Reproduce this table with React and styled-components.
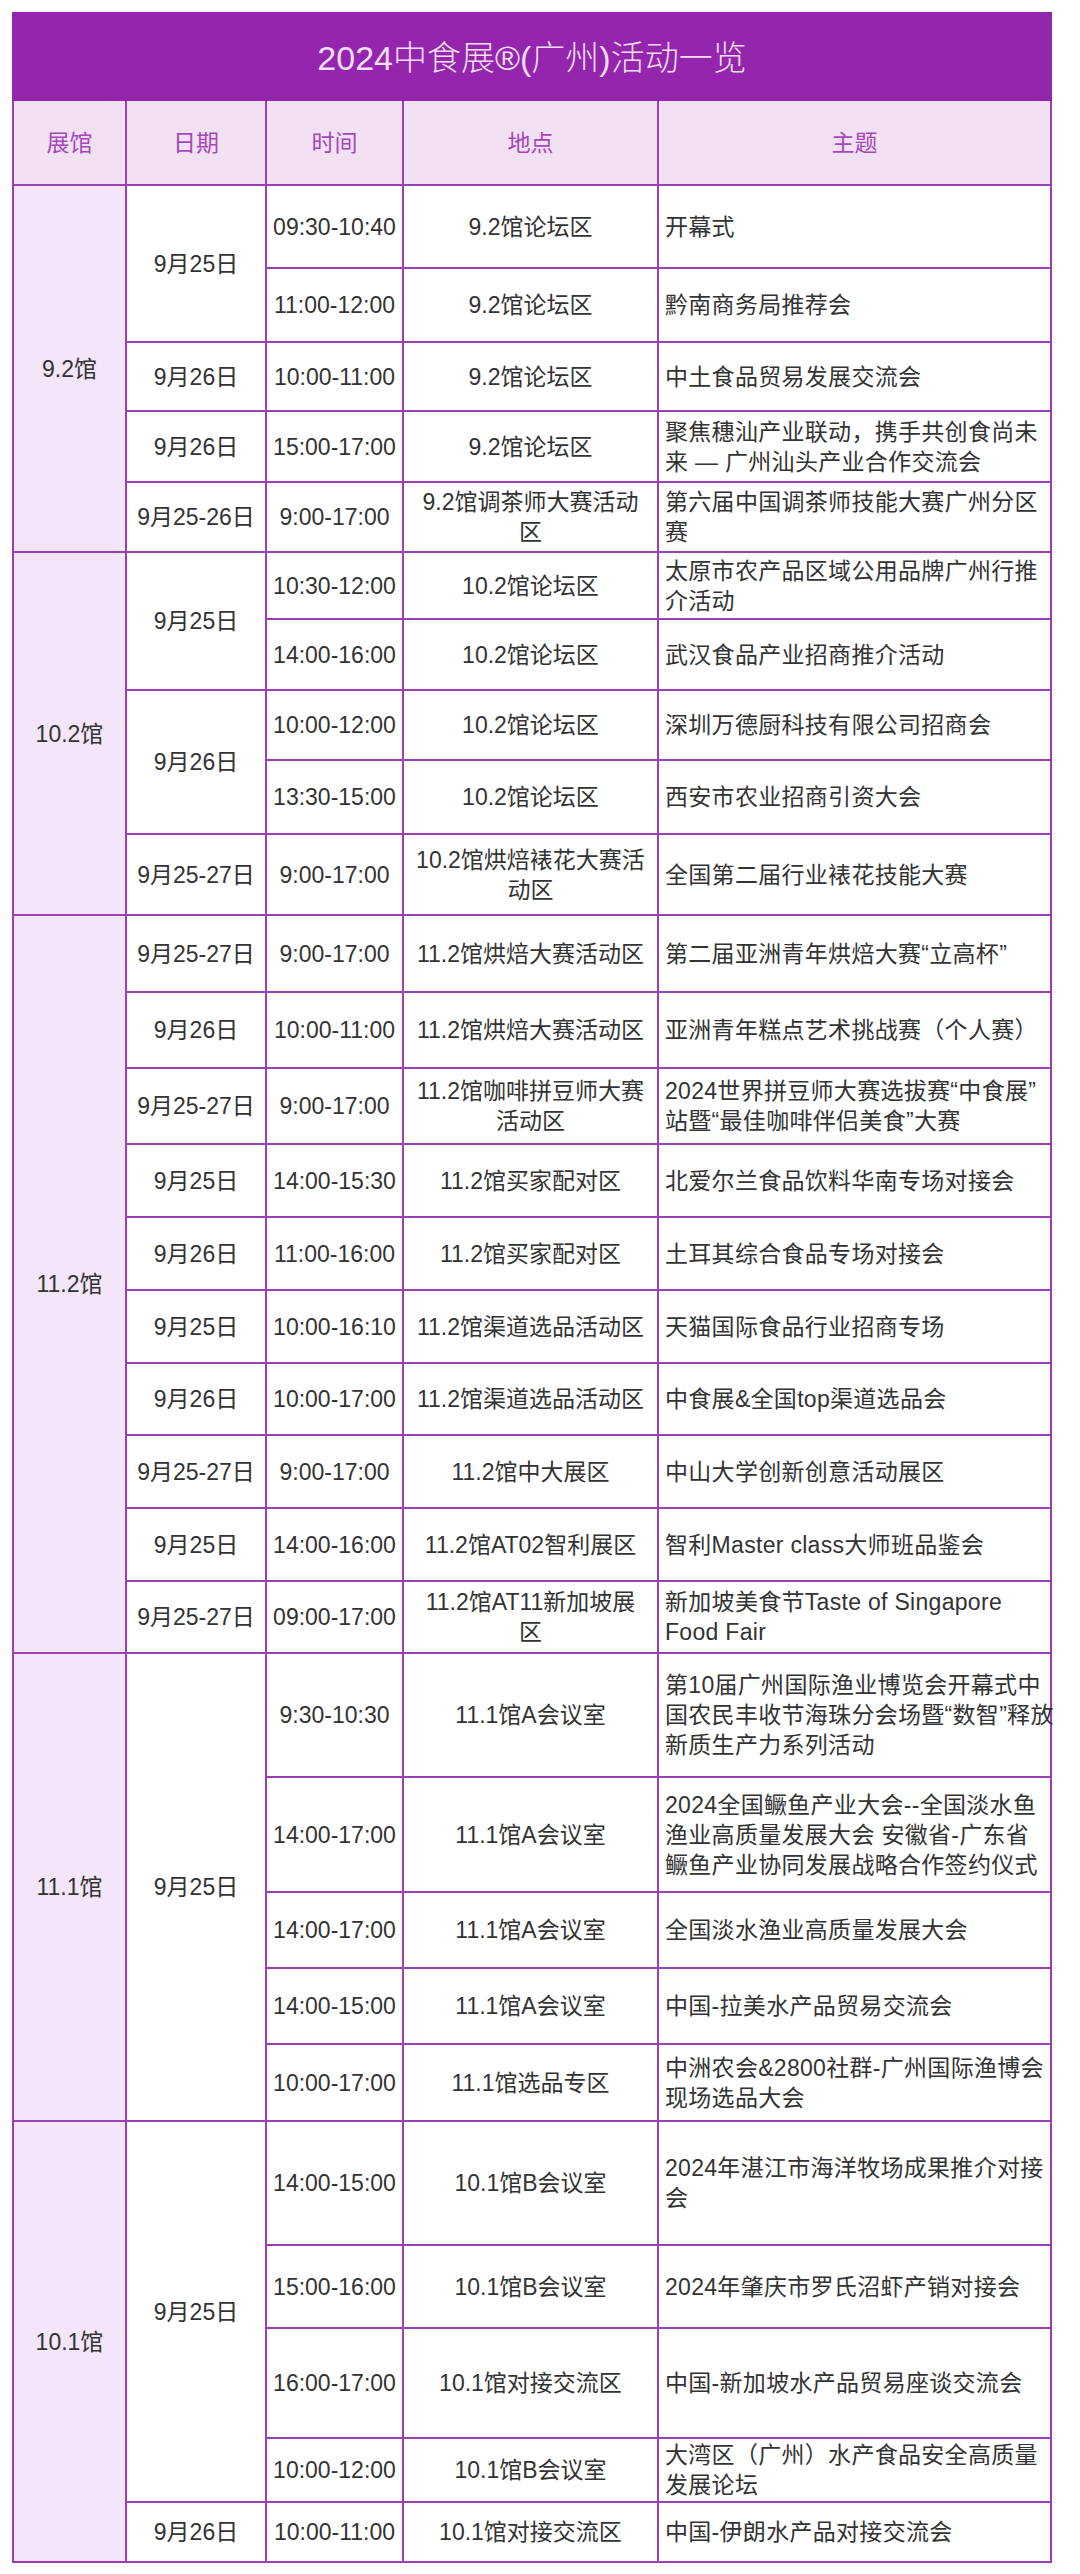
import styled, { createGlobalStyle } from "styled-components";

const GlobalStyle = createGlobalStyle`
  html, body {
    margin: 0;
    padding: 0;
    background: #ffffff;
  }
  body {
    font-family: "Liberation Sans", "Noto Sans CJK SC", sans-serif;
  }
`;

const Page = styled.div`
  padding: 12px 30px 13px 12px;
`;

const Table = styled.table`
  width: 1038px;
  table-layout: fixed;
  border-collapse: collapse;
  font-size: 23px;
  line-height: 30px;
  color: #333333;
`;

const TitleRow = styled.tr`
  height: 87px;
`;

const Title = styled.th`
  background: #9426ad;
  border: 2px solid #9426ad;
  color: #f7ddf7;
  font-family: "Liberation Sans", "Noto Sans CJK SC", sans-serif;
  font-weight: 300;
  font-size: 34px;
  text-align: center;
  vertical-align: middle;
  padding-top: 4px;
`;

const HeadRow = styled.tr`
  height: 85px;
`;

const HeadCell = styled.th`
  background: #f2e1f3;
  border: 2px solid #9c3fb5;
  color: #a648ba;
  font-weight: normal;
  font-size: 23px;
  text-align: center;
  vertical-align: middle;
`;

const Row = styled.tr`
  height: ${(p) => p.$h}px;
`;

const Cell = styled.td`
  border: 2px solid #9c3fb5;
  text-align: center;
  vertical-align: middle;
  padding: 0 3px;
  white-space: pre;
`;

const HallCell = styled(Cell)`
  background: #f4e5f9;
`;

const ThemeCell = styled(Cell)`
  text-align: left;
  padding: 0 1px 0 6px;
  letter-spacing: 0.3px;
`;

const groups = [
  {
    hall: "9.2馆",
    dates: [
      {
        date: "9月25日",
        items: [
          ["09:30-10:40", "9.2馆论坛区", "开幕式", 83],
          ["11:00-12:00", "9.2馆论坛区", "黔南商务局推荐会", 74],
        ],
      },
      { date: "9月26日", items: [["10:00-11:00", "9.2馆论坛区", "中土食品贸易发展交流会", 69]] },
      {
        date: "9月26日",
        items: [["15:00-17:00", "9.2馆论坛区", "聚焦穗汕产业联动，携手共创食尚未\n来 — 广州汕头产业合作交流会", 71]],
      },
      {
        date: "9月25-26日",
        items: [["9:00-17:00", "9.2馆调茶师大赛活动\n区", "第六届中国调茶师技能大赛广州分区\n赛", 70]],
      },
    ],
  },
  {
    hall: "10.2馆",
    dates: [
      {
        date: "9月25日",
        items: [
          ["10:30-12:00", "10.2馆论坛区", "太原市农产品区域公用品牌广州行推\n介活动", 67],
          ["14:00-16:00", "10.2馆论坛区", "武汉食品产业招商推介活动", 71],
        ],
      },
      {
        date: "9月26日",
        items: [
          ["10:00-12:00", "10.2馆论坛区", "深圳万德厨科技有限公司招商会", 70],
          ["13:30-15:00", "10.2馆论坛区", "西安市农业招商引资大会", 74],
        ],
      },
      {
        date: "9月25-27日",
        items: [["9:00-17:00", "10.2馆烘焙裱花大赛活\n动区", "全国第二届行业裱花技能大赛", 81]],
      },
    ],
  },
  {
    hall: "11.2馆",
    dates: [
      { date: "9月25-27日", items: [["9:00-17:00", "11.2馆烘焙大赛活动区", "第二届亚洲青年烘焙大赛“立高杯”", 77]] },
      { date: "9月26日", items: [["10:00-11:00", "11.2馆烘焙大赛活动区", "亚洲青年糕点艺术挑战赛（个人赛）", 76]] },
      {
        date: "9月25-27日",
        items: [["9:00-17:00", "11.2馆咖啡拼豆师大赛\n活动区", "2024世界拼豆师大赛选拔赛“中食展”\n站暨“最佳咖啡伴侣美食”大赛", 76]],
      },
      { date: "9月25日", items: [["14:00-15:30", "11.2馆买家配对区", "北爱尔兰食品饮料华南专场对接会", 73]] },
      { date: "9月26日", items: [["11:00-16:00", "11.2馆买家配对区", "土耳其综合食品专场对接会", 73]] },
      { date: "9月25日", items: [["10:00-16:10", "11.2馆渠道选品活动区", "天猫国际食品行业招商专场", 73]] },
      { date: "9月26日", items: [["10:00-17:00", "11.2馆渠道选品活动区", "中食展&全国top渠道选品会", 72]] },
      { date: "9月25-27日", items: [["9:00-17:00", "11.2馆中大展区", "中山大学创新创意活动展区", 73]] },
      { date: "9月25日", items: [["14:00-16:00", "11.2馆AT02智利展区", "智利Master class大师班品鉴会", 73]] },
      {
        date: "9月25-27日",
        items: [["09:00-17:00", "11.2馆AT11新加坡展\n区", "新加坡美食节Taste of Singapore\nFood Fair", 72]],
      },
    ],
  },
  {
    hall: "11.1馆",
    dates: [
      {
        date: "9月25日",
        items: [
          ["9:30-10:30", "11.1馆A会议室", "第10届广州国际渔业博览会开幕式中\n国农民丰收节海珠分会场暨“数智”释放\n新质生产力系列活动", 124],
          ["14:00-17:00", "11.1馆A会议室", "2024全国鳜鱼产业大会--全国淡水鱼\n渔业高质量发展大会 安徽省-广东省\n鳜鱼产业协同发展战略合作签约仪式", 115],
          ["14:00-17:00", "11.1馆A会议室", "全国淡水渔业高质量发展大会", 76],
          ["14:00-15:00", "11.1馆A会议室", "中国-拉美水产品贸易交流会", 76],
          ["10:00-17:00", "11.1馆选品专区", "中洲农会&2800社群-广州国际渔博会\n现场选品大会", 77],
        ],
      },
    ],
  },
  {
    hall: "10.1馆",
    dates: [
      {
        date: "9月25日",
        items: [
          ["14:00-15:00", "10.1馆B会议室", "2024年湛江市海洋牧场成果推介对接\n会", 124],
          ["15:00-16:00", "10.1馆B会议室", "2024年肇庆市罗氏沼虾产销对接会", 83],
          ["16:00-17:00", "10.1馆对接交流区", "中国-新加坡水产品贸易座谈交流会", 110],
          ["10:00-12:00", "10.1馆B会议室", "大湾区（广州）水产食品安全高质量\n发展论坛", 64],
        ],
      },
      { date: "9月26日", items: [["10:00-11:00", "10.1馆对接交流区", "中国-伊朗水产品对接交流会", 60]] },
    ],
  },
];

const HallGroup = ({ group }) => {
  const total = group.dates.reduce((n, d) => n + d.items.length, 0);
  const rows = [];
  group.dates.forEach((d, di) => {
    d.items.forEach(([time, place, theme, h], ii) => {
      rows.push(
        <Row key={`${di}-${ii}`} $h={h}>
          {di === 0 && ii === 0 && <HallCell rowSpan={total}>{group.hall}</HallCell>}
          {ii === 0 && <Cell rowSpan={d.items.length}>{d.date}</Cell>}
          <Cell>{time}</Cell>
          <Cell>{place}</Cell>
          <ThemeCell>{theme}</ThemeCell>
        </Row>
      );
    });
  });
  return rows;
};

export default function App() {
  return (
    <Page>
      <GlobalStyle />
      <Table>
        <colgroup>
          <col style={{ width: 113 }} />
          <col style={{ width: 140 }} />
          <col style={{ width: 137 }} />
          <col style={{ width: 255 }} />
          <col style={{ width: 393 }} />
        </colgroup>
        <thead>
          <TitleRow>
            <Title colSpan={5}>2024中食展®(广州)活动一览</Title>
          </TitleRow>
          <HeadRow>
            <HeadCell>展馆</HeadCell>
            <HeadCell>日期</HeadCell>
            <HeadCell>时间</HeadCell>
            <HeadCell>地点</HeadCell>
            <HeadCell>主题</HeadCell>
          </HeadRow>
        </thead>
        <tbody>
          {groups.map((g) => (
            <HallGroup key={g.hall} group={g} />
          ))}
        </tbody>
      </Table>
    </Page>
  );
}
